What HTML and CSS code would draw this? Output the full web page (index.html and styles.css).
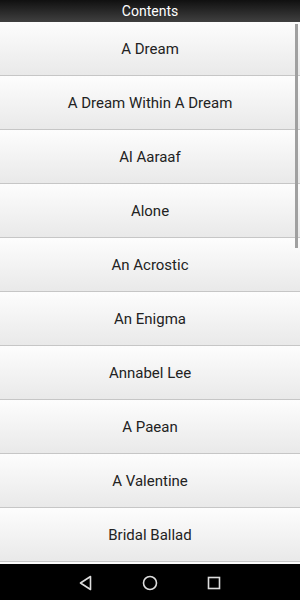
FILE: index.html
```html
<!DOCTYPE html>
<html lang="en">
<head>
    <meta charset="UTF-8">
    <meta name="viewport" content="width=device-width, initial-scale=1.0">
    <title>Contents</title>
    <link rel="stylesheet" href="styles.css">
</head>
<body>
  <div class="screen">
    <div class="header">Contents</div>

    <div class="list">
      <div class="item">A Dream</div>
      <div class="item">A Dream Within A Dream</div>
      <div class="item">Al Aaraaf</div>
      <div class="item">Alone</div>
      <div class="item">An Acrostic</div>
      <div class="item">An Enigma</div>
      <div class="item">Annabel Lee</div>
      <div class="item">A Paean</div>
      <div class="item">A Valentine</div>
      <div class="item">Bridal Ballad</div>
      <div class="scrollbar"></div>
    </div>

    <div class="navbar">
      <svg width="20" height="20" viewBox="0 0 20 20">
        <path d="M14.5 3.5 L4.5 10 L14.5 16.5 Z" fill="none" stroke="#ddd" stroke-width="1.6" stroke-linejoin="round"/>
      </svg>
      <svg width="20" height="20" viewBox="0 0 20 20">
        <circle cx="10" cy="10" r="6.5" fill="none" stroke="#ddd" stroke-width="1.6"/>
      </svg>
      <svg width="20" height="20" viewBox="0 0 20 20">
        <rect x="4.5" y="4.5" width="11" height="11" fill="none" stroke="#ddd" stroke-width="1.6"/>
      </svg>
    </div>
  </div>
</body>
</html>
```

FILE: styles.css
```css
body{
  margin: 0;
  font-family: Roboto, "Noto Sans", sans-serif;
  background-color: #fafafa;
}

.screen{
  width: 300px;
  height: 600px;
  display: flex;
  flex-direction: column;
  overflow: hidden;
}

.header{
  height: 22px;
  line-height: 23px;
  text-align: center;
  color: #fff;
  font-size: 14px;
  font-weight: 400;
  background: linear-gradient(#101010, #404040);
}

.list{
  position: relative;
  height: 542px;
  overflow: hidden;
  background-color: #fbfbfb;
}

.item{
  box-sizing: border-box;
  height: 54px;
  padding-top: 1px;
  border-bottom: 1px solid #c6c6c6;
  display: flex;
  align-items: center;
  justify-content: center;
  font-size: 15px;
  font-weight: 400;
  color: #222;
  background: linear-gradient(#fdfdfd, #e9e9e9);
}

.scrollbar{
  position: absolute;
  top: 2px;
  right: 2px;
  width: 3px;
  height: 224px;
  background-color: #a0a0a0;
}

.navbar{
  flex: 1;
  background-color: #000;
  display: flex;
  align-items: center;
  justify-content: center;
  gap: 44px;
  padding-top: 1px;
}
```
